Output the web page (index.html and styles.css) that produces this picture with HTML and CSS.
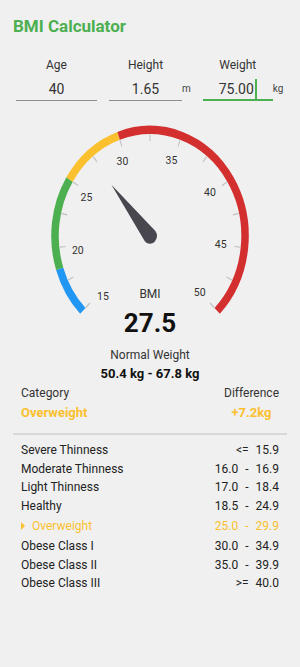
FILE: index.html
```html
<!DOCTYPE html>
<html lang="en">
<head>
    <meta charset="UTF-8">
    <meta name="viewport" content="width=device-width, initial-scale=1.0">
    <title>BMI Calculator</title>
    <link rel="stylesheet" href="styles.css">
</head>
<body>
    <div class="app">
        <h1 class="title">BMI Calculator</h1>

        <div class="fields">
            <div class="field">
                <div class="field-main age">
                    <div class="field-label">Age</div>
                    <div class="field-value">40</div>
                </div>
            </div>
            <div class="field">
                <div class="field-main height">
                    <div class="field-label">Height</div>
                    <div class="field-value">1.65</div>
                </div>
                <span class="unit">m</span>
            </div>
            <div class="field">
                <div class="field-main weight active">
                    <div class="field-label">Weight</div>
                    <div class="field-value">75.00<span class="caret"></span></div>
                </div>
                <span class="unit">kg</span>
            </div>
        </div>

        <div class="gauge">
            <svg class="dial" viewBox="0 0 300 188.2" preserveAspectRatio="none">
                <g class="band" fill="none" stroke-width="7.5">
                    <path stroke="#2196f3" d="M82.82 171.98 A95 95 0 0 1 59.65 134.16"/>
                    <path stroke="#4caf50" d="M59.65 134.16 A95 95 0 0 1 69.56 54.25"/>
                    <path stroke="#fbc02d" d="M69.56 54.25 A95 95 0 0 1 118.62 15.13"/>
                    <path stroke="#d32f2f" d="M118.62 15.13 A95 95 0 0 1 217.18 171.98"/>
                </g>
                <g class="ticks" stroke="#bdbdbd" stroke-width="1">
                    <line x1="85.65" y1="169.15" x2="89.90" y2="164.90"/>
                    <line x1="68.01" y1="144.28" x2="73.41" y2="141.68"/>
                    <line x1="59.57" y1="114.99" x2="65.54" y2="114.32"/>
                    <line x1="61.28" y1="84.55" x2="67.13" y2="85.89"/>
                    <line x1="72.95" y1="56.38" x2="78.03" y2="59.57"/>
                    <line x1="93.26" y1="33.66" x2="97.00" y2="38.35"/>
                    <line x1="119.94" y1="18.91" x2="121.92" y2="24.57"/>
                    <line x1="150" y1="13.8" x2="150" y2="19.8"/>
                    <line x1="180.06" y1="18.91" x2="178.08" y2="24.57"/>
                    <line x1="206.74" y1="33.66" x2="203.00" y2="38.35"/>
                    <line x1="227.05" y1="56.38" x2="221.97" y2="59.57"/>
                    <line x1="238.72" y1="84.55" x2="232.87" y2="85.89"/>
                    <line x1="240.43" y1="114.99" x2="234.46" y2="114.32"/>
                    <line x1="231.99" y1="144.28" x2="226.59" y2="141.68"/>
                    <line x1="214.35" y1="169.15" x2="210.10" y2="164.90"/>
                </g>
                <g class="scale">
                    <text x="103" y="159.1">15</text>
                    <text x="77.8" y="117.8">20</text>
                    <text x="86.5" y="70.1">25</text>
                    <text x="122.5" y="38.1">30</text>
                    <text x="171.5" y="36.6">35</text>
                    <text x="210" y="65.4">40</text>
                    <text x="220.7" y="112.7">45</text>
                    <text x="199.7" y="155.7">50</text>
                </g>
                <g transform="translate(150 104.8) rotate(-40)">
                    <path class="needle" d="M-7 0 L0 -60 L7 0 A7 7 0 0 1 -7 0 Z"/>
                </g>
            </svg>
            <div class="readout">
                <div class="readout-label">BMI</div>
                <div class="readout-value">27.5</div>
            </div>
        </div>

        <div class="normal">
            <div class="normal-label">Normal Weight</div>
            <div class="normal-range">50.4 kg - 67.8 kg</div>
        </div>

        <div class="summary">
            <div class="summary-col">
                <div class="summary-label">Category</div>
                <div class="summary-value">Overweight</div>
            </div>
            <div class="summary-col diff">
                <div class="summary-label">Difference</div>
                <div class="summary-value">+7.2kg</div>
            </div>
        </div>

        <div class="divider"></div>

        <ul class="ranges">
            <li class="range-row">
                <span class="range-name">Severe Thinness</span>
                <span class="range"><span>&lt;=</span><span>15.9</span></span>
            </li>
            <li class="range-row">
                <span class="range-name">Moderate Thinness</span>
                <span class="range"><span>16.0</span><span>-</span><span>16.9</span></span>
            </li>
            <li class="range-row">
                <span class="range-name">Light Thinness</span>
                <span class="range"><span>17.0</span><span>-</span><span>18.4</span></span>
            </li>
            <li class="range-row">
                <span class="range-name">Healthy</span>
                <span class="range"><span>18.5</span><span>-</span><span>24.9</span></span>
            </li>
            <li class="range-row current">
                <span class="range-name">
                    <svg class="marker" viewBox="0 0 4 8"><polygon points="0,0 4,4 0,8"/></svg>
                    Overweight
                </span>
                <span class="range"><span>25.0</span><span>-</span><span>29.9</span></span>
            </li>
            <li class="range-row">
                <span class="range-name">Obese Class I</span>
                <span class="range"><span>30.0</span><span>-</span><span>34.9</span></span>
            </li>
            <li class="range-row">
                <span class="range-name">Obese Class II</span>
                <span class="range"><span>35.0</span><span>-</span><span>39.9</span></span>
            </li>
            <li class="range-row">
                <span class="range-name">Obese Class III</span>
                <span class="range"><span>&gt;=</span><span>40.0</span></span>
            </li>
        </ul>
    </div>
</body>
</html>
```

FILE: styles.css
```css
body {
    margin: 0;
    background-color: #f0f0f0;
    color: #212121;
    font-family: Roboto, "Liberation Sans", Arial, sans-serif;
}
.app {
    width: 300px;
    padding-top: 16px;
}
.title {
    margin: 0;
    padding-left: 13px;
    font-size: 17px;
    line-height: 20px;
    font-weight: bold;
    color: #4caf50;
}

/* inputs */
.fields {
    display: flex;
    gap: 12px;
    margin-top: 21px;
    padding-left: 16px;
}
.field {
    display: flex;
    align-items: flex-end;
}
.field-main.age {
    width: 81px;
}
.field-main.height {
    width: 73px;
}
.field-main.weight {
    width: 70px;
}
.field-label {
    font-size: 12px;
    line-height: 16px;
    text-align: center;
    color: #333;
}
.field-value {
    margin-top: 6px;
    padding-bottom: 1px;
    font-size: 14px;
    line-height: 20px;
    text-align: center;
    color: #333;
    border-bottom: 1px solid #8e8e8e;
}
.active .field-value {
    padding-bottom: 0;
    border-bottom: 2px solid #4caf50;
}
.caret {
    display: inline-block;
    width: 2px;
    height: 22px;
    margin: -2px 0 -2px 1px;
    vertical-align: middle;
    background: #4caf50;
}
.unit {
    padding-bottom: 2px;
    font-size: 10px;
    line-height: 20px;
    color: #444;
}

/* gauge */
.gauge {
    position: relative;
    margin-top: 18px;
}
.dial {
    display: block;
    width: 300px;
    height: 210px;
}
.scale text {
    font-family: Roboto, "Liberation Sans", sans-serif;
    font-size: 10.5px;
    fill: #333;
    text-anchor: middle;
    dominant-baseline: central;
}
.needle {
    fill: #48464f;
}
.readout {
    position: absolute;
    left: 0;
    right: 0;
    top: 168px;
    text-align: center;
}
.readout-label {
    font-size: 12px;
    line-height: 14px;
    color: #333;
}
.readout-value {
    margin-top: 8px;
    font-size: 26px;
    line-height: 28px;
    font-weight: bold;
    color: #111;
}

/* result */
.normal {
    margin-top: 18px;
    text-align: center;
}
.normal-label {
    font-size: 12px;
    line-height: 16px;
    color: #333;
}
.normal-range {
    margin-top: 2px;
    font-size: 13px;
    line-height: 18px;
    font-weight: bold;
    color: #111;
}
.summary {
    display: flex;
    justify-content: space-between;
    margin-top: 1px;
    padding: 0 21px;
}
.summary-col.diff {
    text-align: center;
}
.summary-label {
    font-size: 12px;
    line-height: 19px;
    color: #333;
}
.summary-value {
    font-size: 13px;
    line-height: 19px;
    font-weight: bold;
    color: #fbc02d;
}
.divider {
    height: 2px;
    margin: 11px 13px 0;
    background: #d8d8d8;
}

/* table */
.ranges {
    list-style: none;
    margin: 6px 0 0;
    padding: 0 21px;
}
.range-row {
    display: flex;
    justify-content: space-between;
    font-size: 12px;
    line-height: 18.4px;
    color: #222;
}
.range-row.current {
    padding: 2px 0;
    color: #fbc02d;
}
.range {
    display: flex;
    gap: 7px;
}
.range-name {
    display: flex;
    align-items: center;
}
.marker {
    width: 4px;
    height: 8px;
    margin-right: 7px;
    fill: #fbc02d;
}
```
